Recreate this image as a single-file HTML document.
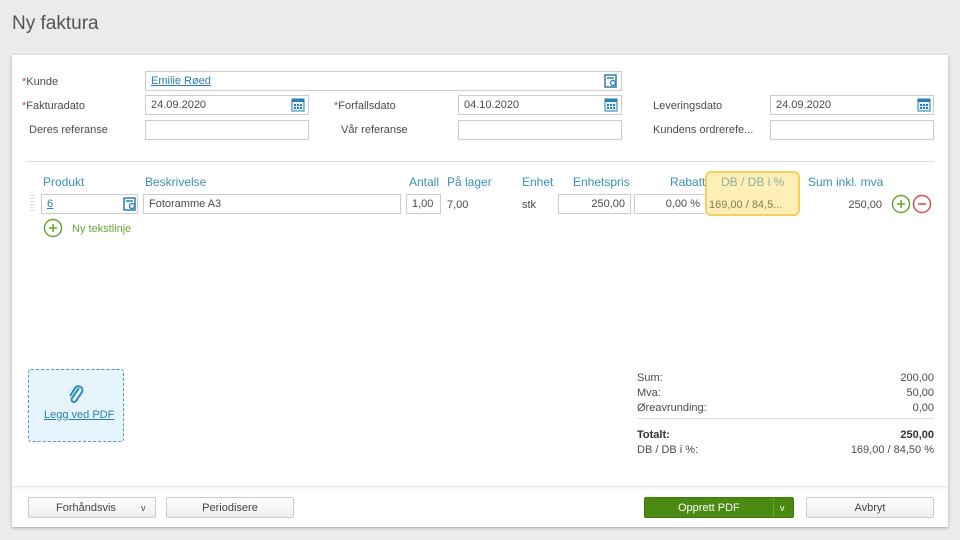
<!DOCTYPE html>
<html><head><meta charset="utf-8"><style>
*{box-sizing:border-box;margin:0;padding:0}
body{width:960px;height:540px;background:#ebebeb;font-family:"Liberation Sans",sans-serif;font-size:11px;color:#4a4a4a;position:relative;overflow:hidden}
.a{position:absolute}
.panel{left:12px;top:55px;width:936px;height:472px;background:#fff;box-shadow:0 1px 3px rgba(0,0,0,.3)}
.inp{position:absolute;height:20px;border:1px solid #ccc;background:#fff;padding:0 5px;line-height:18px;white-space:nowrap}
.lbl{position:absolute;line-height:14px;white-space:nowrap}
.req{color:#c44}
.hd{position:absolute;color:#3a8fb7;font-size:12px;line-height:14px;white-space:nowrap}
.btn{position:absolute;top:497px;height:21px;border:1px solid #ccc;border-radius:2px;background:linear-gradient(#fff,#eee);text-align:center;line-height:20px;color:#444}
.r{text-align:right}
</style></head><body>
<div class="a" style="left:12px;top:13px;font-size:19px;color:#555">Ny faktura</div>
<div class="a panel"></div>

<div class="lbl" style="left:22px;top:75px"><span class="req">*</span>Kunde</div>
<div class="inp" style="left:145px;top:71px;width:477px"><span style="color:#2a7db0;text-decoration:underline">Emilie Røed</span></div>
<svg class="a" style="left:604px;top:74px" width="14" height="14"><rect x="1" y="1" width="11" height="12" fill="none" stroke="#2a7db0" stroke-width="1.5"/><line x1="3" y1="4" x2="10" y2="4" stroke="#2a7db0" stroke-width="1.5"/><circle cx="9" cy="9" r="2.5" fill="#fff" stroke="#2a7db0" stroke-width="1.3"/></svg>

<div class="lbl" style="left:22px;top:99px"><span class="req">*</span>Fakturadato</div>
<div class="inp" style="left:145px;top:95px;width:164px">24.09.2020</div>
<div class="lbl" style="left:334px;top:99px"><span class="req">*</span>Forfallsdato</div>
<div class="inp" style="left:458px;top:95px;width:164px">04.10.2020</div>
<div class="lbl" style="left:653px;top:99px">Leveringsdato</div>
<div class="inp" style="left:770px;top:95px;width:164px">24.09.2020</div>
<svg class="a" style="left:291px;top:97px" width="14" height="15"><rect x="1" y="2" width="12" height="12" fill="#e3f1f8" stroke="#2a7db0"/><rect x="1" y="2" width="12" height="3" fill="#2a7db0"/><g fill="#2a7db0"><rect x="3" y="7" width="2" height="2"/><rect x="6" y="7" width="2" height="2"/><rect x="9" y="7" width="2" height="2"/><rect x="3" y="10" width="2" height="2"/><rect x="6" y="10" width="2" height="2"/><rect x="9" y="10" width="2" height="2"/></g></svg>
<svg class="a" style="left:604px;top:97px" width="14" height="15"><rect x="1" y="2" width="12" height="12" fill="#e3f1f8" stroke="#2a7db0"/><rect x="1" y="2" width="12" height="3" fill="#2a7db0"/><g fill="#2a7db0"><rect x="3" y="7" width="2" height="2"/><rect x="6" y="7" width="2" height="2"/><rect x="9" y="7" width="2" height="2"/><rect x="3" y="10" width="2" height="2"/><rect x="6" y="10" width="2" height="2"/><rect x="9" y="10" width="2" height="2"/></g></svg>
<svg class="a" style="left:917px;top:97px" width="14" height="15"><rect x="1" y="2" width="12" height="12" fill="#e3f1f8" stroke="#2a7db0"/><rect x="1" y="2" width="12" height="3" fill="#2a7db0"/><g fill="#2a7db0"><rect x="3" y="7" width="2" height="2"/><rect x="6" y="7" width="2" height="2"/><rect x="9" y="7" width="2" height="2"/><rect x="3" y="10" width="2" height="2"/><rect x="6" y="10" width="2" height="2"/><rect x="9" y="10" width="2" height="2"/></g></svg>

<div class="lbl" style="left:29px;top:123px">Deres referanse</div>
<div class="inp" style="left:145px;top:120px;width:164px"></div>
<div class="lbl" style="left:341px;top:123px">Vår referanse</div>
<div class="inp" style="left:458px;top:120px;width:164px"></div>
<div class="lbl" style="left:653px;top:123px">Kundens ordrerefe...</div>
<div class="inp" style="left:770px;top:120px;width:164px"></div>

<div class="a" style="left:27px;top:161px;width:907px;height:1px;background:#ddd"></div>

<div class="a" style="left:705px;top:171px;width:95px;height:45px;background:#fdefb5;border:2px solid #f7cf5c;border-radius:6px"></div>
<div class="hd" style="left:43px;top:175px">Produkt</div>
<div class="hd" style="left:145px;top:175px">Beskrivelse</div>
<div class="hd" style="left:409px;top:175px">Antall</div>
<div class="hd" style="left:447px;top:175px">På lager</div>
<div class="hd" style="left:522px;top:175px">Enhet</div>
<div class="hd" style="left:573px;top:175px">Enhetspris</div>
<div class="hd" style="left:670px;top:175px">Rabatt</div>
<div class="hd" style="left:721px;top:175px;color:#8ab0a0">DB / DB i %</div>
<div class="hd" style="left:808px;top:175px">Sum inkl. mva</div>

<div class="a" style="left:30px;top:195px;width:5px;height:17px;background:repeating-linear-gradient(#ddd 0 1px,transparent 1px 3px)"></div>
<div class="inp" style="left:41px;top:194px;width:97px"><span style="color:#2a7db0;text-decoration:underline">6</span></div>
<svg class="a" style="left:123px;top:197px" width="14" height="14"><rect x="1" y="1" width="11" height="12" fill="none" stroke="#2a7db0" stroke-width="1.5"/><line x1="3" y1="4" x2="10" y2="4" stroke="#2a7db0" stroke-width="1.5"/><circle cx="9" cy="9" r="2.5" fill="#fff" stroke="#2a7db0" stroke-width="1.3"/></svg>
<div class="inp" style="left:143px;top:194px;width:258px">Fotoramme A3</div>
<div class="inp" style="left:406px;top:194px;width:35px">1,00</div>
<div class="lbl" style="left:447px;top:198px">7,00</div>
<div class="lbl" style="left:522px;top:198px">stk</div>
<div class="inp r" style="left:558px;top:194px;width:73px">250,00</div>
<div class="inp r" style="left:634px;top:194px;width:71px;border-right:none">0,00 %</div>
<div class="lbl" style="left:709px;top:198px;color:#8a7a50">169,00 / 84,5...</div>
<div class="lbl r" style="left:820px;top:198px;width:62px">250,00</div>
<svg class="a" style="left:891px;top:194px" width="44" height="20"><circle cx="10" cy="10" r="8.5" fill="none" stroke="#6aa53a" stroke-width="1.5"/><path d="M10 6v8M6 10h8" stroke="#6aa53a" stroke-width="1.6"/><circle cx="31" cy="10" r="8.5" fill="none" stroke="#d05050" stroke-width="1.5"/><path d="M27 10h8" stroke="#d05050" stroke-width="1.6"/></svg>

<svg class="a" style="left:43px;top:218px" width="20" height="20"><circle cx="10" cy="10" r="8.5" fill="none" stroke="#6aa53a" stroke-width="1.5"/><path d="M10 6v8M6 10h8" stroke="#6aa53a" stroke-width="1.6"/></svg>
<div class="lbl" style="left:72px;top:222px;color:#6aa53a">Ny tekstlinje</div>

<div class="a" style="left:28px;top:369px;width:96px;height:73px;background:#e6f5fc;border:1px dashed #4a9ac0;border-radius:3px"></div>
<svg class="a" style="left:66px;top:384px" width="20" height="22"><path d="M13 4 L6 14 a2.5 2.5 0 0 0 4 3 L16 8 a4 4 0 0 0 -6.5 -4.5 L4 12" fill="none" stroke="#2a8ac0" stroke-width="2"/></svg>
<div class="lbl" style="left:44px;top:408px;color:#2a7db0;text-decoration:underline">Legg ved PDF</div>

<div class="lbl" style="left:637px;top:371px">Sum:</div><div class="lbl r" style="left:840px;top:371px;width:94px">200,00</div>
<div class="lbl" style="left:637px;top:386px">Mva:</div><div class="lbl r" style="left:840px;top:386px;width:94px">50,00</div>
<div class="lbl" style="left:637px;top:401px">Øreavrunding:</div><div class="lbl r" style="left:840px;top:401px;width:94px">0,00</div>
<div class="a" style="left:637px;top:418px;width:297px;height:1px;background:#ddd"></div>
<div class="lbl" style="left:637px;top:428px;font-weight:bold;color:#333">Totalt:</div><div class="lbl r" style="left:840px;top:428px;width:94px;font-weight:bold;color:#333">250,00</div>
<div class="lbl" style="left:637px;top:443px">DB / DB i %:</div><div class="lbl r" style="left:800px;top:443px;width:134px">169,00 / 84,50 %</div>

<div class="a" style="left:12px;top:486px;width:936px;height:41px;background:#fff;border-top:1px solid #e5e5e5;box-shadow:inset 0 2px 2px rgba(0,0,0,.03)"></div>
<div class="btn" style="left:28px;width:128px;text-align:left;padding-left:27px">Forhåndsvis <span style="position:absolute;left:112px;font-size:9px">v</span></div>
<div class="btn" style="left:166px;width:128px">Periodisere</div>
<div class="btn" style="left:644px;width:150px;background:#4b8a12;border-color:#3f7a0c;color:#fff;text-align:left;padding-left:33px">Opprett PDF<span style="position:absolute;left:128px;top:0;width:1px;height:19px;background:#6ea040"></span><span style="position:absolute;left:135px;font-size:9px">v</span></div>
<div class="btn" style="left:806px;width:128px">Avbryt</div>
</body></html>
